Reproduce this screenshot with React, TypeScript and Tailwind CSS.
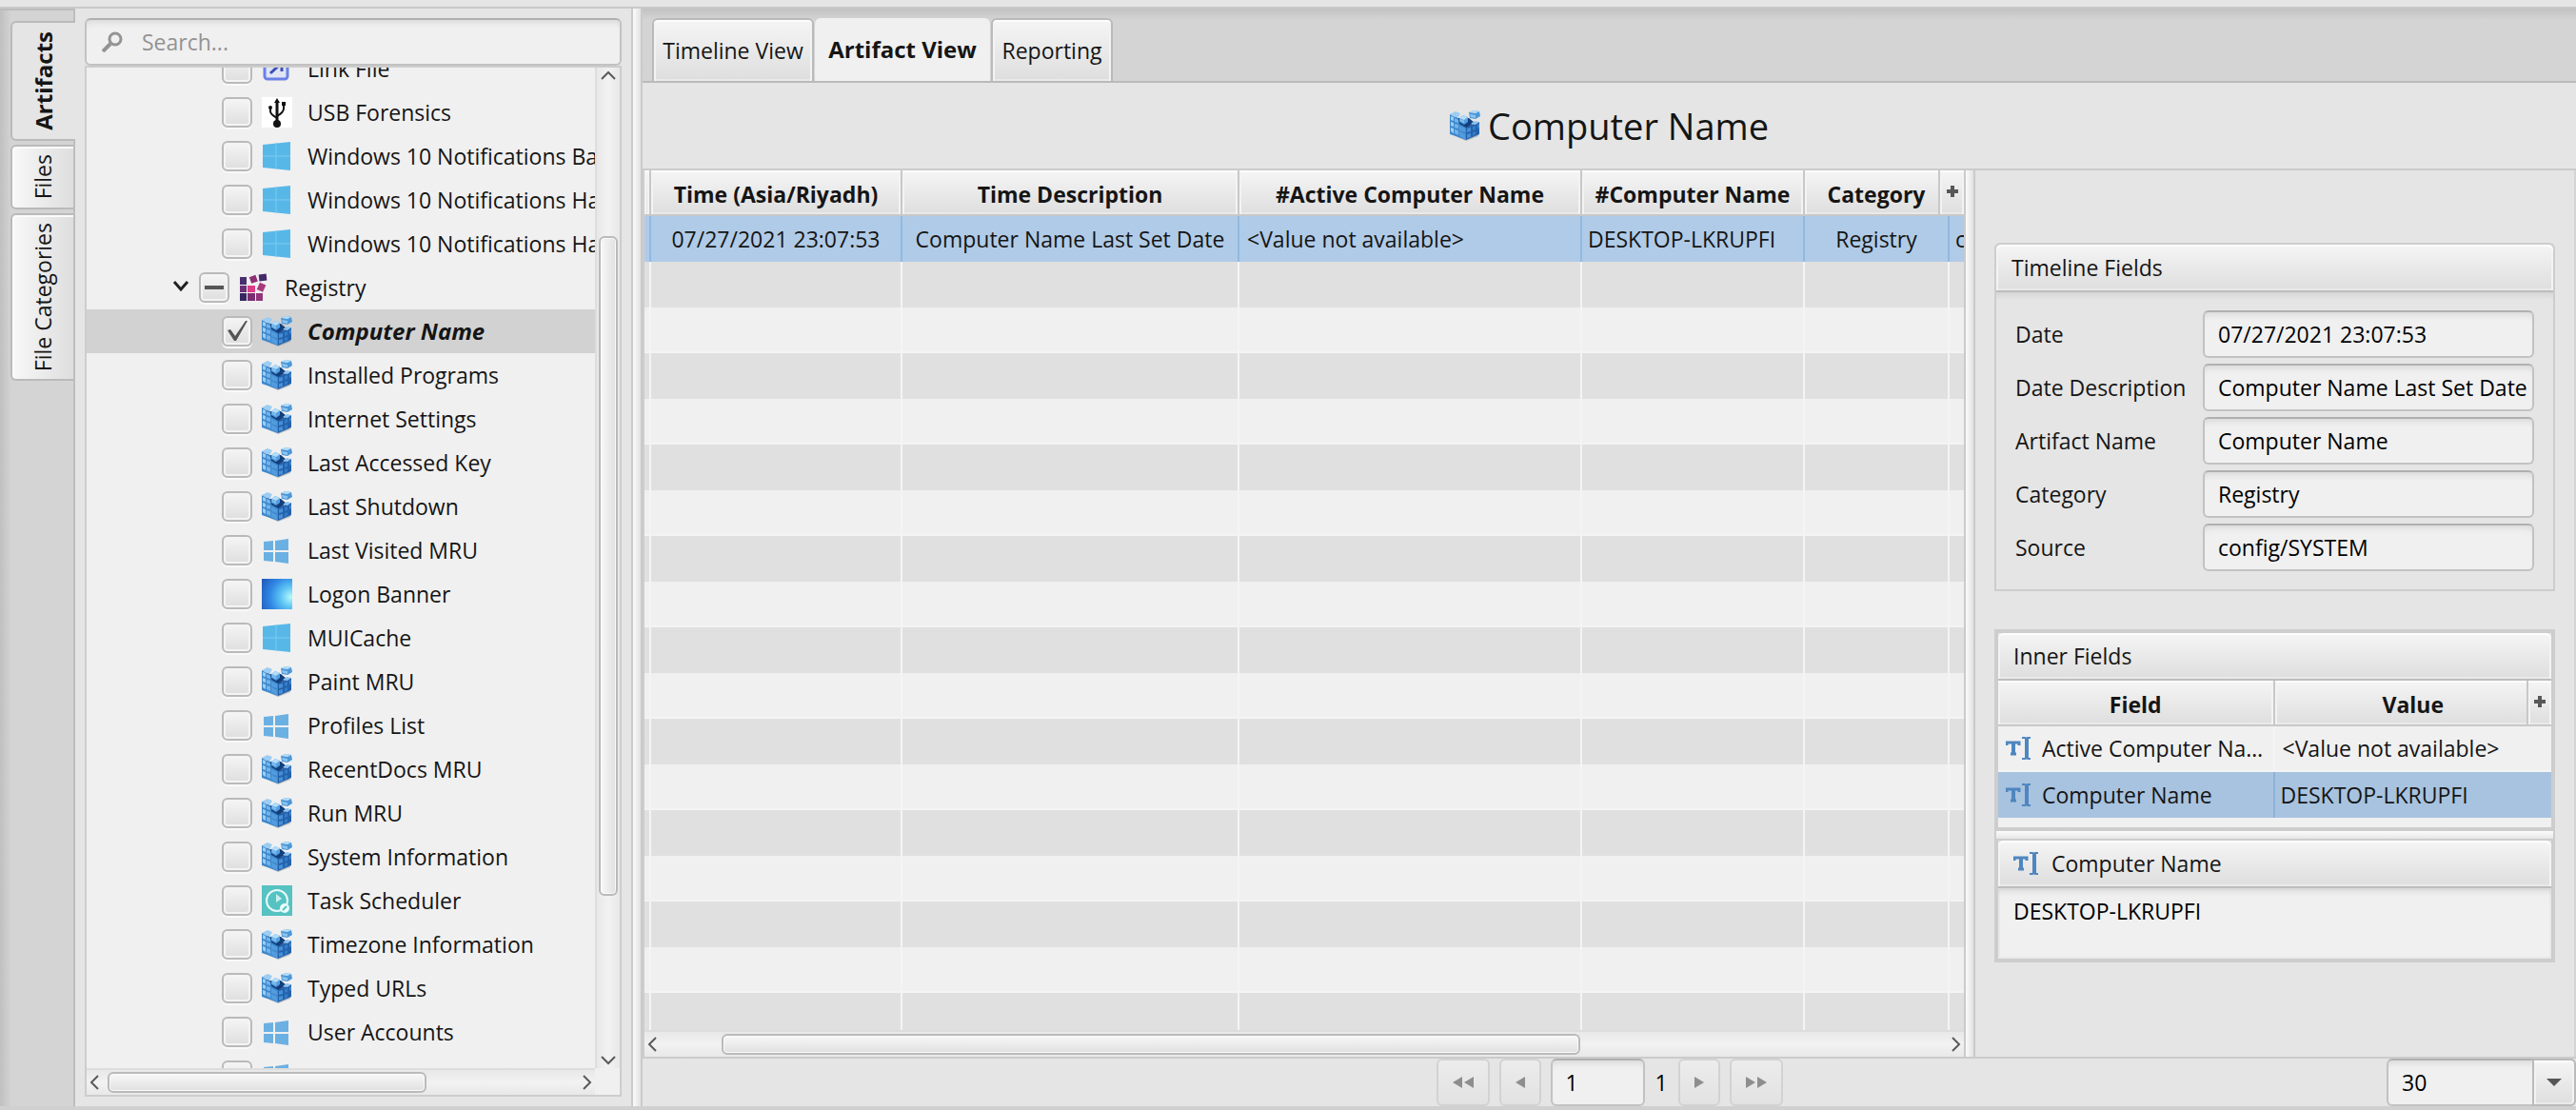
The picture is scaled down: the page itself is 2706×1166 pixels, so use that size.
import { useEffect, useRef } from "react";
import type { ReactNode } from "react";

type IconName = "link" | "usb" | "win" | "winSmall" | "reg" | "logon" | "task";

const treeItems: { name: string; icon: IconName }[] = [
  { name: "Link File", icon: "link" },
  { name: "USB Forensics", icon: "usb" },
  { name: "Windows 10 Notifications Ba", icon: "win" },
  { name: "Windows 10 Notifications Ha", icon: "win" },
  { name: "Windows 10 Notifications Ha", icon: "win" },
];

const registryItems: { name: string; icon: IconName; selected?: boolean }[] = [
  { name: "Computer Name", icon: "reg", selected: true },
  { name: "Installed Programs", icon: "reg" },
  { name: "Internet Settings", icon: "reg" },
  { name: "Last Accessed Key", icon: "reg" },
  { name: "Last Shutdown", icon: "reg" },
  { name: "Last Visited MRU", icon: "winSmall" },
  { name: "Logon Banner", icon: "logon" },
  { name: "MUICache", icon: "win" },
  { name: "Paint MRU", icon: "reg" },
  { name: "Profiles List", icon: "winSmall" },
  { name: "RecentDocs MRU", icon: "reg" },
  { name: "Run MRU", icon: "reg" },
  { name: "System Information", icon: "reg" },
  { name: "Task Scheduler", icon: "task" },
  { name: "Timezone Information", icon: "reg" },
  { name: "Typed URLs", icon: "reg" },
  { name: "User Accounts", icon: "winSmall" },
  { name: "UserAssist", icon: "winSmall" },
];

const timelineFields = [
  { label: "Date", value: "07/27/2021 23:07:53" },
  { label: "Date Description", value: "Computer Name Last Set Date" },
  { label: "Artifact Name", value: "Computer Name" },
  { label: "Category", value: "Registry" },
  { label: "Source", value: "config/SYSTEM" },
];

const emptyRows = Array.from({ length: 17 }, (_, i) => i);

// shared looks
const raised =
  "bg-linear-to-b from-[#f5f5f5] to-[#dedede] shadow-[inset_0_2px_0_#fdfdfd,inset_2px_0_0_#f3f3f3,inset_-2px_0_0_#f3f3f3,inset_0_-2px_0_#e9e9e9]";
const field =
  "border-2 border-[#c2c2c2] border-t-[#b0b0b0] rounded-md bg-[#f0f0f0] shadow-[inset_0_8px_6px_-5px_#dadada]";
const thumbV =
  "mx-[2px] rounded-md border-2 border-[#bababa] bg-linear-to-r from-[#f8f8f8] to-[#e0e0e0] shadow-[inset_0_0_0_1px_#fafafa]";
const thumbH =
  "my-[2px] rounded-md border-2 border-[#bababa] bg-linear-to-b from-[#f8f8f8] to-[#e0e0e0] shadow-[inset_0_0_0_1px_#fafafa]";

/* ---------- icons ---------- */

function RegistryIcon() {
  return (
    <svg viewBox="0 0 32 32" className="size-8 shrink-0">
      <path d="M8 28 17 32 30 27 30 24Z" fill="#8f9aa5" opacity=".6" />
      <path d="M0 4 9 8 17 14 17 31 0 25Z" fill="#3f88cc" />
      <path d="M17 17 31 12 31 25 17 31Z" fill="#2462ac" />
      <path d="M0 4 6 1 11 3 9 7 5 7Z" fill="#9dcdf2" />
      <path d="M9 8 20 8 26 13 17 18 10 14Z" fill="#123f7c" />
      <path d="M1 6 4 7 4 11 1 10ZM1 12 4 13 4 17 1 16ZM1 18 4 19 4 24 1 22Z" fill="#9bcff5" />
      <path d="M5 8 9 10 9 13 5 12ZM5 14 9 15 9 19 5 18ZM5 20 9 21 9 26 5 24Z" fill="#72b3ea" />
      <path d="M10 16 16 19 16 23 10 21ZM10 22 16 25 16 30 10 27Z" fill="#529cdd" />
      <path d="M18 19 22 18 22 22 18 23ZM18 25 22 24 22 28 18 29Z" fill="#4690d8" />
      <path d="M24 17 27 16 27 20 24 21ZM24 23 27 22 27 25 24 27Z" fill="#347cc8" />
      <path d="M22 14 26 11 31 12 27 15Z" fill="#8dc3ef" />
      <path d="M29 15 31 14 31 18 29 19Z" fill="#3f86cf" />
      <path d="M10 8 14 5 19 7 19 12 15 15 10 12Z" fill="#559fdf" />
      <path d="M10 8 14 5 19 7 15 10Z" fill="#b4dcf8" />
      <path d="M11 9 15 11 15 13 11 11Z" fill="#86c2ef" />
      <path d="M20 2 25 0 31 1 32 6 27 9 21 8Z" fill="#4d97d6" />
      <path d="M20 2 25 0 31 1 27 3Z" fill="#b8def8" />
      <path d="M21 4 27 5 27 8 22 7Z" fill="#8bc4ef" />
    </svg>
  );
}

function RegistryGroupIcon() {
  return (
    <svg viewBox="0 0 32 32" className="size-8 shrink-0">
      <rect x="1" y="5" width="7" height="8" fill="#4a2f70" />
      <rect x="12" y="4" width="7" height="7" fill="#8d2f73" transform="rotate(-20 15 8)" />
      <rect x="21" y="2" width="8" height="7" fill="#43286a" transform="rotate(-6 25 5)" />
      <rect x="1" y="14" width="7" height="7" fill="#6b2f78" />
      <rect x="9" y="14" width="8" height="7" fill="#dc3c85" />
      <rect x="20" y="12" width="7" height="8" fill="#a83a7d" transform="rotate(24 24 16)" />
      <rect x="1" y="22" width="7" height="8" fill="#37265f" />
      <rect x="9" y="22" width="8" height="8" fill="#7c2c70" />
      <rect x="18" y="22" width="7" height="8" fill="#93357a" />
    </svg>
  );
}

function ItemIcon({ name }: { name: IconName }) {
  if (name === "reg") return <RegistryIcon />;
  if (name === "link")
    return (
      <svg viewBox="0 0 32 32" className="size-8 shrink-0">
        <rect x="3" y="3" width="24" height="24" rx="3" fill="#dfe4f6" stroke="#6b80e6" strokeWidth="3" />
        <path d="M9 21 20 11M12 10H21V19" fill="none" stroke="#3c50b4" strokeWidth="3" />
      </svg>
    );
  if (name === "usb")
    return (
      <svg viewBox="0 0 32 32" className="size-8 shrink-0 bg-white">
        <path d="M16 4V28" stroke="#111" strokeWidth="3" />
        <path d="M13 6 16 1 19 6Z" fill="#111" />
        <path d="M9 11V15Q9 18 16 22M23 8V12Q23 16 16 20" fill="none" stroke="#111" strokeWidth="2" />
        <circle cx="9" cy="11" r="2" fill="#111" />
        <rect x="21" y="5" width="4" height="4" fill="#111" />
        <circle cx="16" cy="28" r="4" fill="#111" />
      </svg>
    );
  if (name === "win")
    return (
      <svg viewBox="0 0 32 32" className="size-8 shrink-0">
        <path d="M1 4 30 1V31L1 28Z" fill="#57b8e8" />
        <path d="M15 2V30M1 16H30" stroke="#7ccaf0" strokeWidth="1" />
      </svg>
    );
  if (name === "winSmall")
    return (
      <svg viewBox="0 0 32 32" className="size-8 shrink-0">
        <path d="M2 7 12 6V16H2ZM14 6 28 4V16H14ZM2 18H12V28L2 27ZM14 18H28V30L14 28Z" fill="#6bb0e2" />
      </svg>
    );
  if (name === "logon")
    return (
      <span className="size-8 shrink-0 bg-[radial-gradient(circle_at_95%_60%,#b4f8fa_0%,#5cc4f4_30%,#2f86e4_62%,#2256b4_100%)]" />
    );
  return (
    <svg viewBox="0 0 32 32" className="size-8 shrink-0 bg-[#56c2c2]">
      <circle cx="16" cy="16" r="11" fill="none" stroke="#e8fafa" strokeWidth="2" />
      <path d="M15 9V18L21 14Z" fill="#c8f0f0" />
      <circle cx="24" cy="24" r="5" fill="#e8fafa" />
      <path d="M22 26 26 22" stroke="#56c2c2" strokeWidth="2" />
    </svg>
  );
}

function TextFieldIcon() {
  return (
    <svg viewBox="0 0 28 28" className="size-7 shrink-0" fill="none" stroke="#4f86c0">
      <path d="M1 11V8H14V11M5 20H11" strokeWidth="3" />
      <path d="M8 8V20" strokeWidth="4" />
      <path d="M17 3H20L22 4 23 3H26M17 25H20L22 24 23 25H26" strokeWidth="2" />
      <path d="M22 3V25" strokeWidth="4" />
    </svg>
  );
}

function Plus() {
  return (
    <svg viewBox="0 0 12 12" className="size-3">
      <path d="M6 0V12M0 6H12" stroke="#575757" strokeWidth="4" />
    </svg>
  );
}

function Arrow({ d, label }: { d: "up" | "down" | "left" | "right"; label: string }) {
  const paths = {
    up: "M2 12 9 5 16 12",
    down: "M2 6 9 13 16 6",
    left: "M12 2 5 9 12 16",
    right: "M6 2 13 9 6 16",
  };
  return (
    <button aria-label={label} className="flex shrink-0 items-center justify-center">
      <svg viewBox="0 0 18 18" className="size-[18px]">
        <path d={paths[d]} fill="none" stroke="#5a5a5a" strokeWidth="2" />
      </svg>
    </button>
  );
}

/* ---------- tree ---------- */

function TreeCheck({ label, checked, mixed }: { label: string; checked?: boolean; mixed?: boolean }) {
  const ref = useRef<HTMLInputElement>(null);

  useEffect(() => {
    if (ref.current) ref.current.indeterminate = !!mixed;
  }, [mixed]);

  return (
    <span className="relative size-8 shrink-0">
      <input
        ref={ref}
        type="checkbox"
        aria-label={label}
        defaultChecked={checked}
        className="block size-8 appearance-none rounded-md border-2 border-[#bababa] bg-linear-to-b from-[#f5f5f5] to-[#dedede] shadow-[inset_0_0_0_2px_#f4f4f4,0_2px_0_#f9f9f9]"
      />
      {checked && (
        <svg viewBox="0 0 32 32" className="pointer-events-none absolute inset-0 size-8">
          <path d="M6 15 9 14 14 21 25 5 27 5 15 26 13 26Z" fill="#555" />
        </svg>
      )}
      {mixed && <span className="pointer-events-none absolute top-[14px] left-[6px] h-1 w-5 bg-[#555]" />}
    </span>
  );
}

function TreeRow({ item }: { item: { name: string; icon: IconName; selected?: boolean } }) {
  return (
    <li
      className={
        item.selected
          ? "flex h-[46px] items-center gap-[10px] bg-[#d2d2d2] pl-[142px] text-[24px] font-bold italic"
          : "flex h-[46px] items-center gap-[10px] pl-[142px]"
      }
    >
      <TreeCheck label={item.name} checked={item.selected} />
      <ItemIcon name={item.icon} />
      <span className="pl-[6px] whitespace-nowrap">{item.name}</span>
    </li>
  );
}

function TreePanel() {
  return (
    <aside className="flex w-[584px] shrink-0 flex-col p-[10px]">
      <div className={"flex h-[50px] shrink-0 items-center gap-5 px-4 " + field}>
        <svg viewBox="0 0 22 22" className="size-[22px]" fill="none" stroke="#939393">
          <circle cx="14" cy="8" r="6" strokeWidth="3" />
          <path d="M9 13 1 21" strokeWidth="4" />
        </svg>
        <input
          type="text"
          aria-label="Search"
          placeholder="Search..."
          className="min-w-0 flex-1 bg-transparent outline-none placeholder:text-[#939393]"
        />
      </div>
      <div className="grid min-h-0 flex-1 grid-cols-[minmax(0,1fr)_26px] grid-rows-[minmax(0,1fr)_28px] border-2 border-[#cdcdcd] bg-[#f0f0f0]">
        <div className="overflow-hidden">
          <ul className="-mt-[22px]">
            {treeItems.map((item, i) => (
              <TreeRow key={i} item={item} />
            ))}
            <li className="flex h-[46px] items-center gap-[10px] pl-[90px]">
              <button aria-label="Collapse Registry" className="mr-[-2px] flex w-5">
                <svg viewBox="0 0 20 20" className="size-5">
                  <path d="M2 4 9 12 16 4" fill="none" stroke="#222" strokeWidth="3" />
                </svg>
              </button>
              <TreeCheck label="Registry" mixed />
              <RegistryGroupIcon />
              <span className="pl-[6px]">Registry</span>
            </li>
            {registryItems.map((item) => (
              <TreeRow key={item.name} item={item} />
            ))}
          </ul>
        </div>
        <div className="flex flex-col border-l-2 border-[#dddddd] bg-linear-to-r from-[#e8e8e8] via-[#f2f2f2] to-[#e8e8e8]">
          <Arrow d="up" label="Scroll up" />
          <div className="flex-[160]" />
          <div className={"flex-[692] " + thumbV} />
          <div className="flex-[164]" />
          <Arrow d="down" label="Scroll down" />
        </div>
        <div className="flex border-t-2 border-[#dddddd] bg-linear-to-b from-[#e8e8e8] via-[#f2f2f2] to-[#e8e8e8]">
          <Arrow d="left" label="Scroll left" />
          <div className="flex-[4]" />
          <div className={"flex-[334] " + thumbH} />
          <div className="flex-[160]" />
          <Arrow d="right" label="Scroll right" />
        </div>
        <div />
      </div>
    </aside>
  );
}

/* ---------- centre table ---------- */

function ArtifactTable() {
  const head = "h-12 border-r-2 border-b-2 border-[#c8c8c8] p-0 pt-[3px] text-center font-bold " + raised;
  const sel = "h-12 border-r-2 border-[#8fb9e3] bg-[#b0cbe7] p-0 whitespace-nowrap overflow-hidden";

  return (
    <div className="flex min-w-0 flex-1 flex-col border-l-2 border-[#cdcdcd]">
      <div className="relative min-h-0 flex-1 overflow-hidden">
        <table className="w-full table-fixed border-separate border-spacing-0">
          <colgroup>
            <col className="w-[7px]" />
            <col className="w-[264px]" />
            <col className="w-[354px]" />
            <col className="w-[360px]" />
            <col className="w-[234px]" />
            <col className="w-[152px]" />
            <col />
          </colgroup>
          <thead>
            <tr>
              <th className={head} />
              <th className={head}>Time (Asia/Riyadh)</th>
              <th className={head}>Time Description</th>
              <th className={head}>#Active Computer Name</th>
              <th className={head}>#Computer Name</th>
              <th className={head}>Category</th>
              <th className={head} />
            </tr>
          </thead>
          <tbody>
            <tr>
              <td className={sel} />
              <td className={sel + " text-center"}>07/27/2021 23:07:53</td>
              <td className={sel + " text-center"}>Computer Name Last Set Date</td>
              <td className={sel}>
                <span className="pl-2">&lt;Value not available&gt;</span>
              </td>
              <td className={sel}>
                <span className="pl-[6px]">DESKTOP-LKRUPFI</span>
              </td>
              <td className={sel + " text-center"}>Registry</td>
              <td className="h-12 overflow-hidden bg-[#b0cbe7] p-0 pl-[6px] whitespace-nowrap">config/SYSTEM</td>
            </tr>
            {emptyRows.map((r) => (
              <tr key={r} className={r % 2 ? "bg-[#f0f0f0]" : "bg-[#e0e0e0]"}>
                {[0, 1, 2, 3, 4, 5].map((c) => (
                  <td
                    key={c}
                    className={
                      r % 2
                        ? "h-12 border-r-2 border-b-2 border-[#f4f4f4] p-0"
                        : "h-12 border-r-2 border-[#f4f4f4] p-0"
                    }
                  />
                ))}
                <td className={r % 2 ? "h-12 border-b-2 border-[#f4f4f4] p-0" : "h-12 p-0"} />
              </tr>
            ))}
          </tbody>
        </table>
        <button
          aria-label="Choose columns"
          className={"absolute top-0 right-0 flex h-12 w-[27px] justify-center border-b-2 border-l-2 border-[#c8c8c8] pt-4 " + raised}
        >
          <Plus />
        </button>
      </div>
      <div className="flex h-7 shrink-0 border-t-2 border-[#dddddd] bg-linear-to-b from-[#e8e8e8] via-[#f2f2f2] to-[#e8e8e8]">
        <Arrow d="left" label="Scroll table left" />
        <div className="flex-[63]" />
        <div className={"flex-[901] " + thumbH} />
        <div className="flex-[386]" />
        <Arrow d="right" label="Scroll table right" />
      </div>
    </div>
  );
}

/* ---------- details ---------- */

function PaneTitle({ children }: { children: ReactNode }) {
  return (
    <h2 className={"flex h-[50px] items-center gap-3 rounded-t-md border-b-2 border-[#bdbdbd] px-4 " + raised}>
      {children}
    </h2>
  );
}

function Details() {
  const th = "h-12 border-b-2 border-[#c8c8c8] p-0 pt-[3px] font-bold " + raised;

  return (
    <section className="flex w-[631px] shrink-0 flex-col border-r-2 border-[#d4d4d4] px-5 pt-[76px]">
      <div className="rounded-t-md border-2 border-[#cdcdcd]">
        <PaneTitle>Timeline Fields</PaneTitle>
        <div className="flex flex-col gap-[6px] py-[19px] pr-5 pl-5 shadow-[inset_0_8px_6px_-5px_#d2d2d2]">
          {timelineFields.map((f) => (
            <label key={f.label} className="flex items-center">
              <span className="flex-1 whitespace-nowrap">{f.label}</span>
              <input
                readOnly
                value={f.value}
                className={"h-[50px] w-[348px] pr-1 pl-[14px] text-black outline-none " + field}
              />
            </label>
          ))}
        </div>
      </div>

      <div className="mt-10 border-2 border-[#cdcdcd]">
        <div className="border-2 border-b-4 border-[#cdcdcd]">
          <PaneTitle>Inner Fields</PaneTitle>
          <div className="relative h-[154px] overflow-hidden bg-[#f0f0f0]">
            <table className="w-full table-fixed border-separate border-spacing-0">
              <thead>
                <tr>
                  <th className={"w-1/2 border-r-2 " + th}>Field</th>
                  <th className={th}>Value</th>
                </tr>
              </thead>
              <tbody>
                <tr>
                  <td className="h-12 border-r-2 border-b-2 border-[#f4f4f4] p-0">
                    <div className="flex items-center gap-[10px] pl-2">
                      <TextFieldIcon />
                      <span className="truncate">Active Computer Name</span>
                    </div>
                  </td>
                  <td className="h-12 border-b-2 border-[#f4f4f4] p-0 pl-2">&lt;Value not available&gt;</td>
                </tr>
                <tr className="bg-[#a8c3df]">
                  <td className="h-12 border-r-2 border-[#8db2da] p-0">
                    <div className="flex items-center gap-[10px] pl-2">
                      <TextFieldIcon />
                      <span className="truncate">Computer Name</span>
                    </div>
                  </td>
                  <td className="h-12 p-0 pl-[6px]">DESKTOP-LKRUPFI</td>
                </tr>
              </tbody>
            </table>
            <button
              aria-label="Choose field columns"
              className={"absolute top-0 right-0 flex h-12 w-[26px] justify-center border-b-2 border-l-2 border-[#c8c8c8] pt-4 " + raised}
            >
              <Plus />
            </button>
          </div>
        </div>
        <div className="h-2 bg-linear-to-b from-[#fbfbfb] to-[#e6e6e6]" />
        <div className="border-2 border-[#cdcdcd]">
          <PaneTitle>
            <TextFieldIcon />
            <span>Computer Name</span>
          </PaneTitle>
          <textarea
            readOnly
            aria-label="Field value"
            defaultValue="DESKTOP-LKRUPFI"
            className="block h-[74px] w-full resize-none bg-[#f0f0f0] px-4 py-2 leading-8 text-black shadow-[inset_0_8px_6px_-5px_#d6d6d6,inset_0_0_0_2px_#e8e8e8] outline-none"
          />
        </div>
      </div>
    </section>
  );
}

/* ---------- pager ---------- */

function PageButton({ label, w, d }: { label: string; w: string; d: string }) {
  return (
    <button
      disabled
      aria-label={label}
      className={"flex h-[50px] items-center justify-center rounded-md border-2 border-[#d2d2d2] bg-linear-to-b from-[#ececec] to-[#e2e2e2] " + w}
    >
      <svg viewBox="0 0 22 12" className="h-3 w-[22px]">
        <path d={d} fill="#8e8e8e" />
      </svg>
    </button>
  );
}

function Pager() {
  return (
    <footer className="grid h-[50px] shrink-0 grid-cols-[1fr_auto_1fr]">
      <div />
      <div className="flex items-center gap-[10px]">
        <PageButton label="First page" w="w-[56px]" d="M10 0V12L0 6ZM22 0V12L12 6Z" />
        <PageButton label="Previous page" w="w-[44px]" d="M16 0V12L6 6Z" />
        <input aria-label="Page" defaultValue="1" className={"h-[50px] w-[99px] px-[14px] text-black outline-none " + field} />
        <span className="w-[15px] text-center text-black">1</span>
        <PageButton label="Next page" w="w-[44px]" d="M6 0V12L16 6Z" />
        <PageButton label="Last page" w="w-[56px]" d="M0 0V12L10 6ZM12 0V12L22 6Z" />
      </div>
      <div className="relative w-[199px] justify-self-end">
        <select
          aria-label="Rows per page"
          defaultValue="30"
          className={"h-[50px] w-full appearance-none px-[14px] text-black outline-none " + field}
        >
          <option>30</option>
          <option>50</option>
          <option>100</option>
        </select>
        <span
          className={"pointer-events-none absolute top-0 right-0 flex h-[50px] w-[46px] items-center justify-center rounded-r-md border-2 border-[#bababa] " + raised}
        >
          <svg viewBox="0 0 16 8" className="h-2 w-4">
            <path d="M0 0H16L8 8Z" fill="#555" />
          </svg>
        </span>
      </div>
    </footer>
  );
}

/* ---------- page ---------- */

export default function App() {
  const sideTab =
    "flex w-[66px] items-center justify-center rounded-l-md border-2 border-r-0 border-[#bababa] bg-linear-to-r from-[#f8f8f8] to-[#dedede] shadow-[inset_2px_2px_0_#fbfbfb]";
  const topTab = "rounded-t-md border-2 border-b-0 border-[#bababa] " + raised;

  return (
    <div className="flex h-screen flex-col overflow-hidden border-b-4 border-[#d0d0d0] bg-[#e5e5e5] pt-[7px] font-['Open_Sans','Noto_Sans',sans-serif] text-[23px] leading-8 text-[#151515]">
      <div className="flex min-h-0 flex-1 border-t-2 border-[#c9c9c9]">
        <nav className="flex w-[79px] shrink-0 flex-col gap-1 border-r-2 border-[#bdbdbd] bg-[#d4d4d4] bg-linear-to-r from-[#c0c0c0] to-[#d4d4d4] to-[12px] pt-[13px] pl-[11px] shadow-[inset_0_2px_0_#bcbcbc]">
          <button className="flex h-[126px] w-[68px] items-center justify-center rounded-l-md border-2 border-r-0 border-[#bababa] bg-[#e5e5e5] text-[24px] font-bold">
            <span className="rotate-180 [writing-mode:vertical-rl]">Artifacts</span>
          </button>
          <button className={"h-[68px] " + sideTab}>
            <span className="rotate-180 [writing-mode:vertical-rl]">Files</span>
          </button>
          <button className={"h-[176px] " + sideTab}>
            <span className="rotate-180 [writing-mode:vertical-rl]">File Categories</span>
          </button>
        </nav>

        <TreePanel />

        <div className="w-3 shrink-0 border-x-2 border-[#cacaca] bg-linear-to-r from-[#fbfbfb] to-[#e2e2e2]" />

        <main className="flex min-w-0 flex-1 flex-col">
          <div className="flex h-[78px] shrink-0 items-stretch gap-px border-b-2 border-[#bababa] bg-linear-to-b from-[#c2c2c2] to-[#d4d4d4] to-[12px] pt-[10px] pl-[10px]">
            <button className={"w-[170px] " + topTab}>Timeline View</button>
            <button className="w-[184px] rounded-t-md bg-[#f0f0f0] text-[24px] font-bold">Artifact View</button>
            <button className={"w-[128px] " + topTab}>Reporting</button>
          </div>
          <h1 className="flex h-[90px] shrink-0 items-center justify-center gap-2 text-[38px] leading-[48px]">
            <RegistryIcon />
            Computer Name
          </h1>
          <div className="flex min-h-0 flex-1 border-y-2 border-[#cbcbcb]">
            <ArtifactTable />
            <div className="w-3 shrink-0 border-x-2 border-[#cacaca] bg-linear-to-r from-[#fbfbfb] to-[#e2e2e2]" />
            <Details />
          </div>
          <Pager />
        </main>
      </div>
    </div>
  );
}
